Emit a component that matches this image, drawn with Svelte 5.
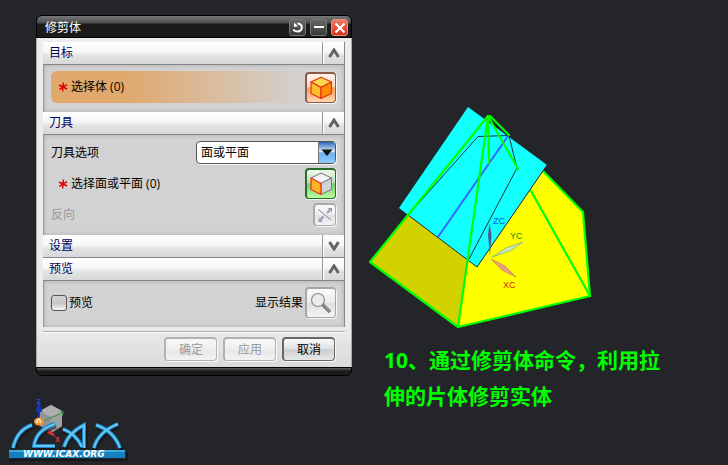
<script>
  let tool = $state('face');
  let preview = $state(false);
  let open = $state({ target: true, tool: true, settings: false, preview: true });
  const letters =
    'M13 447 Q17 429 32 424 M55 423 Q36 429 34 445 H55 M64 446 Q68 432 84 424 V447 M63 428 Q76 433 82 446 M94 447 Q98 431 118 423 M96 424 Q114 430 120 447';
</script>

{#snippet head(id, title)}
  <h2 class="head">
    <span class="title">{title}</span>
    <button class="fold" aria-label={title} aria-expanded={open[id]} onclick={() => (open[id] = !open[id])}>
      <svg width="12" height="10" viewBox="0 0 12 10">
        <path d={open[id] ? 'M1.5 9 L6 2 L10.5 9' : 'M1.5 1 L6 8 L10.5 1'} />
      </svg>
    </button>
  </h2>
{/snippet}

{#snippet star()}
  <svg class="star" width="10" height="10" viewBox="0 0 10 10" aria-hidden="true">
    <path d="M5.4 0.5 L4.6 9.5 M1 3 L9 7 M9 2.6 L1.4 7.4" />
  </svg>
{/snippet}

<main class="desk">
  <div class="left">
    <section class="dialog" aria-label="修剪体">
      <header class="bar">
        <h1>修剪体</h1>
        <button class="sys" aria-label="重置">
          <svg width="13" height="13" viewBox="0 0 13 13"><path d="M6.500 2.500 C12.500 2.500 12 10.500 6.500 10.500 C4.500 10.500 3 9.700 2.200 8.500" /><path d="M7 5.200 L3 1.500 V6 Z" fill="#fff" /></svg>
        </button>
        <button class="sys" aria-label="最小化">
          <svg width="12" height="12" viewBox="0 0 12 12"><path d="M1 5 H11" /></svg>
        </button>
        <button class="sys close" aria-label="关闭">
          <svg width="12" height="12" viewBox="0 0 12 12"><path d="M1.5 1.5 L10.5 10.5 M10.5 1.5 L1.5 10.5" /></svg>
        </button>
      </header>

      <div class="body">
        {@render head('target', '目标')}
        {#if open.target}
          <div class="panel">
            <div class="row pick active">
              {@render star()}
              <span class="grow">选择体 (0)</span>
              <button class="tile orange" aria-label="选择体">
                <svg width="24" height="24" viewBox="0 0 24 24" stroke="#e0341a" stroke-width="1.2" stroke-linejoin="round">
                  <path d="M2 6 L12 1.200 L22.500 6 L12 11.500 Z" fill="#ffd94a" />
                  <path d="M2 6 L12 11.500 V22.500 L2 17.500 Z" fill="#ffbe2c" />
                  <path d="M22.500 6 L12 11.500 V22.500 L22.500 17.500 Z" fill="#ff8b05" />
                </svg>
              </button>
            </div>
          </div>
        {/if}

        {@render head('tool', '刀具')}
        {#if open.tool}
          <div class="panel">
            <div class="row">
              <label class="grow" for="tool">刀具选项</label>
              <span class="combo">
                <select id="tool" bind:value={tool}>
                  <option value="face">面或平面</option>
                  <option value="new">新建平面</option>
                </select>
                <span class="drop" aria-hidden="true">
                  <svg width="12" height="8" viewBox="0 0 12 8"><path d="M0.5 0.5 H11.5 L6 7 Z" fill="#111" /></svg>
                </span>
              </span>
            </div>
            <div class="row pick">
              {@render star()}
              <span class="grow">选择面或平面 (0)</span>
              <button class="tile green" aria-label="选择面或平面">
                <svg width="24" height="24" viewBox="0 0 24 24" stroke="#77777c" stroke-width="1" stroke-linejoin="round">
                  <path d="M2 6 L12 1.200 L22.500 6 L12 11.500 Z" fill="#f6f3f8" />
                  <path d="M22.500 6 L12 11.500 V22.500 L22.500 17.500 Z" fill="#d2d2d6" />
                  <path d="M2 6 L12 11.500 V22.500 L2 17.500 Z" fill="#ffb327" stroke="#e93a12" stroke-width="1.3" />
                </svg>
              </button>
            </div>
            <div class="row off">
              <span class="grow">反向</span>
              <button class="tile small" aria-label="反向" disabled>
                <svg width="16" height="16" viewBox="0 0 16 16">
                  <path d="M1.500 2.500 L14 13" stroke="#88888c" />
                  <path d="M3.500 12.500 L6.500 9.500 M10 6 L13 3" stroke="#9a9ab8" stroke-width="2" />
                  <path d="M1.500 10.500 V15 H6 Z M10.500 1 H15 V5.500 Z" fill="#9a9ab8" />
                </svg>
              </button>
            </div>
          </div>
        {/if}

        {@render head('settings', '设置')}
        {#if open.settings}<div class="panel"></div>{/if}

        {@render head('preview', '预览')}
        {#if open.preview}
          <div class="panel">
            <div class="row">
              <label class="check grow"><input type="checkbox" bind:checked={preview} />预览</label>
              <span>显示结果</span>
              <button class="tile plain" aria-label="显示结果">
                <svg width="22" height="22" viewBox="0 0 22 22" fill="none">
                  <circle cx="8" cy="8" r="6.500" stroke="#8c8c8c" stroke-width="1.2" fill="#ececec" />
                  <path d="M12.5 12.5 L20 20" stroke="#77777e" stroke-width="3.4" />
                  <path d="M13 12.3 L19.8 19" stroke="#aaaab4" stroke-width="1" />
                </svg>
              </button>
            </div>
          </div>
        {/if}

        <footer>
          <button class="cmd" disabled>确定</button>
          <button class="cmd" disabled>应用</button>
          <button class="cmd">取消</button>
        </footer>
      </div>
      <div class="base"></div>
    </section>

    <svg class="logo" width="122" height="66" viewBox="6 396 122 66" role="img" aria-label="ICAX">
      <path d="M51 404 L62 410 V425 L51 432 L40 425 V410 Z" fill="#929396" />
      <path d="M51 404 L62 410 L51 416 L40 410 Z" fill="#adaeb0" />
      <path d="M51 416 L62 410 V425 L51 432 Z" fill="#a0a1a3" />
      <path d="M39 421 V405 M37 410 L39 403 L41 410 Z" stroke="#1238b4" stroke-width="2" fill="#1238b4" />
      <path d="M43 420 L60 413" stroke="#49994a" stroke-width="1.2" />
      <path d="M45 426 L52 431" stroke="#d63737" stroke-width="1.500" />
      <path d="M50 428 L56 436 L47 432 Z" fill="#d63737" />
      <g font-family="Liberation Sans, sans-serif" font-size="7" font-weight="bold">
        <text x="36.500" y="403" fill="#1f4fe0">Z</text>
        <text x="60" y="415" fill="#33a03a">Y</text>
        <text x="55" y="441" fill="#e23c3c">X</text>
      </g>
      <g fill="none">
        <path d={letters} transform="translate(1 2)" stroke="#0d0e10" stroke-width="5" opacity="0.5" />
        <path d={letters} stroke="#1a86c8" stroke-width="4" />
        <path d={letters} stroke="#62c6f2" stroke-width="2" />
      </g>
      <ellipse cx="39" cy="420.500" rx="5" ry="4" fill="#f2932c" />
      <path d="M36.500 422 L37.500 419 Q41 417 40 422" fill="none" stroke="#fff" stroke-width="1.3" />
      <path d="M9 459 H127 V452" fill="none" stroke="#101114" stroke-width="2" opacity="0.7" />
      <rect x="9" y="449" width="116" height="8" fill="#1680bd" />
      <rect x="9" y="449" width="116" height="2" fill="#3cace0" />
      <text x="23" y="456" font-family="DejaVu Sans, sans-serif" font-weight="bold" font-style="italic" font-size="9" fill="#fff">WWW.ICAX.ORG</text>
    </svg>
  </div>

  <div class="right">
    <svg class="scene" width="240" height="235" viewBox="360 100 240 235" fill="none" role="img" aria-label="实体与片体">
      <path d="M543 171 L583 212 L590 296 L458 327 L468 259 L477 267 Z" fill="#ffff00" />
      <path d="M370 262 L408 215 L469 259 L458 327 Z" fill="#d2d200" />
      <path d="M468 107 L547 165 L477 267 L399 208 Z" fill="#1ff" />
      <path d="M547 165 L477 267 L408 215 M488 116 L509 135.500 L478 136.500 L409 214 M509 136 L517 168 L469 259 M488 119 L508 136" stroke="#20303a" />
      <path d="M508 136 L438 237" stroke="#3a62ff" stroke-width="2" />
      <g stroke="#0f0" stroke-width="2.200" stroke-linecap="round" stroke-linejoin="round">
        <path d="M488 116 L370 262 L458 327 L590 296 L583 212 L544 172" />
        <path d="M458 327 L488 116 L489 163 M488 116 L518 169 M490 116 L509 135 M531 191 L590 296" />
      </g>
      <path d="M489.500 223 L491.500 235 L490 255 L488 235 Z" fill="#4c5690" />
      <path d="M492 257 L507 247.500 L523 242 L511 250.500 Z" fill="#c9e8bd" stroke="#7f9a70" stroke-width="0.600" />
      <path d="M491 259 L505 266 L516 277 L502 270 Z" fill="#eba07e" stroke="#b57257" stroke-width="0.600" />
      <g font-family="Liberation Sans, sans-serif" font-size="9">
        <text x="493" y="224" fill="#0a50e8">ZC</text>
        <text x="510" y="239" fill="#168a16">YC</text>
        <text x="503" y="288" fill="#e02010">XC</text>
      </g>
    </svg>
    <p class="note">10、通过修剪体命令，利用拉伸的片体修剪实体</p>
  </div>
</main>

<style>
  :global(body) {
    margin: 0;
    background: #242529;
  }
  .desk {
    display: flex;
    align-items: flex-start;
    gap: 8px;
    min-height: 100vh;
    box-sizing: border-box;
    font: 12px/18px 'Open Sans', 'Noto Sans CJK SC', sans-serif;
    color: #000;
  }
  button, select, input {
    font: inherit;
    margin: 0;
    padding: 0;
    box-sizing: border-box;
    appearance: none;
  }
  svg {
    display: block;
    flex: none;
  }
  .left {
    flex: 0 1 352px;
    min-width: 300px;
    display: flex;
    flex-direction: column;
    gap: 21px;
    padding-top: 15px;
  }
  .dialog {
    margin-left: 36px;
  }
  .bar {
    height: 23px;
    box-sizing: border-box;
    display: flex;
    align-items: center;
    gap: 4px;
    padding: 2px 3px 0 8px;
    border: 1px solid #000;
    border-radius: 6px 6px 0 0;
    background: linear-gradient(#77787a 0, #4a4b4d 7px, #1b1b1b 8px, #1b1b1b);
  }
  h1 {
    flex: 1;
    margin: 0;
    font-size: 12px;
    font-weight: 400;
    color: #fff;
  }
  .sys {
    display: grid;
    place-items: center;
    width: 17px;
    height: 17px;
    border: 1px solid #777;
    border-radius: 3px;
    background: linear-gradient(#666, #393939);
  }
  .sys path {
    fill: none;
    stroke: #fff;
    stroke-width: 2;
  }
  .sys path[fill] {
    fill: #fff;
    stroke: none;
  }
  .close {
    border-color: #f08b78;
    background: linear-gradient(#f07b65, #dd3018);
  }
  .body {
    padding: 4px 6px 6px;
    border: solid #aaa;
    border-width: 0 1px;
    background: linear-gradient(#ededed, #ebebeb 290px, #dadada);
  }
  .head {
    display: flex;
    height: 23px;
    box-sizing: border-box;
    margin: 0;
    border-bottom: 1px solid #858585;
    border-right: 1px solid #888;
    background: linear-gradient(#fff 0, #f5f6f6 10px, #e3e5e5 13px, #d6d8d9);
    font-size: 12px;
    font-weight: 400;
    line-height: 22px;
    color: #00005a;
  }
  .title {
    flex: 1;
    padding-left: 6px;
  }
  .fold {
    display: grid;
    place-items: center;
    width: 22px;
    border: 0;
    border-left: 1px solid #999;
    box-shadow: inset 1px 0 #fff;
    background: none;
  }
  .fold path {
    fill: none;
    stroke: #626262;
    stroke-width: 3;
  }
  .panel {
    display: flex;
    flex-direction: column;
    gap: 4px;
    padding: 6px 8px 9px 7px;
    border-left: 1px solid #999;
    border-right: 1px solid #888;
    background: #d2d2d2;
    box-shadow: inset 0 0 4px #aaa;
  }
  .row {
    display: flex;
    align-items: center;
    min-height: 23px;
  }
  .grow {
    flex: 1;
  }
  .pick {
    padding-left: 7px;
    gap: 3px;
  }
  .active {
    height: 32px;
    border-radius: 6px;
    background: linear-gradient(90deg, #e0a86c 25%, #d2d2d200 90%);
  }
  .star path {
    stroke: #e00000;
    stroke-width: 1.5;
  }
  .tile {
    display: grid;
    place-items: center;
    width: 31px;
    height: 31px;
    border: 2px solid #777;
    border-bottom-width: 1px;
    border-right-width: 1px;
    border-radius: 4px;
    box-shadow: 1px 1px #f5f5f5;
    background: linear-gradient(#fafafa, #ececec 50%, #e0e0e0 51%, #f4f4f4);
  }
  .orange {
    border-color: #8a5b48;
    background: linear-gradient(#fff3e9, #ffddc5 45%, #ff9e5c 50%, #ffd5b2);
  }
  .green {
    border-color: #276b29;
    background: linear-gradient(#f0f8ee, #b9dfb3 45%, #7bc973 50%, #b9ff9b);
  }
  .small {
    width: 23px;
    height: 23px;
    border-color: #aaa;
  }
  .plain {
    margin-left: 2px;
    border-color: #a5a5a5;
  }
  .off {
    color: #999;
  }
  .combo {
    position: relative;
    width: 140px;
  }
  select {
    display: block;
    width: 100%;
    height: 23px;
    padding-left: 4px;
    border: 1px solid #555;
    border-radius: 4px;
    box-shadow: 1px 1px #f5f5f5;
    background: #fff;
    color: #000;
  }
  .drop {
    position: absolute;
    top: 1px;
    right: 1px;
    bottom: 1px;
    width: 16px;
    display: grid;
    place-items: center;
    border-left: 1px solid #777;
    border-radius: 0 3px 3px 0;
    background: linear-gradient(#2b65b5, #dbeafa 45%, #6bb0ee 52%, #8ecbfa);
    pointer-events: none;
  }
  .check {
    display: flex;
    align-items: center;
    gap: 2px;
  }
  input {
    width: 16px;
    height: 16px;
    border: 1px solid #555;
    border-radius: 3px;
    background: linear-gradient(#d5d5d5, #c6c6c6 50%, #f4f4f4);
  }
  input:checked {
    background: #555;
  }
  footer {
    display: flex;
    justify-content: flex-end;
    gap: 6px;
    margin-top: 4px;
    padding: 5px 10px 0 0;
    border-top: 1px solid #aaa;
    box-shadow: inset 0 1px #fff;
  }
  .cmd {
    width: 53px;
    height: 24px;
    border: 2px solid #666;
    border-right-width: 1px;
    border-bottom-width: 1px;
    border-radius: 4px;
    box-shadow: 1px 1px #fafafa;
    background: linear-gradient(#fafafa, #e2e2e4 45%, #cdced1 52%, #e8e8e8);
    color: #000;
  }
  .cmd:disabled {
    border-color: #b2b2b2;
    background: linear-gradient(#f8f8f8, #eee 50%, #e7e7e7 52%, #f3f3f3);
    color: #999;
  }
  .base {
    height: 9px;
    box-sizing: border-box;
    border: 1px solid #000;
    border-radius: 0 0 6px 6px;
    background: linear-gradient(#5c5e5e, #1b1c1c 3px);
  }
  .logo {
    margin-left: 6px;
  }
  .right {
    flex: 1;
    padding-top: 100px;
  }
  .note {
    max-width: 288px;
    margin: 7px 0 0 24px;
    font-size: 21px;
    font-weight: 700;
    line-height: 36px;
    color: #0f0;
  }
</style>
